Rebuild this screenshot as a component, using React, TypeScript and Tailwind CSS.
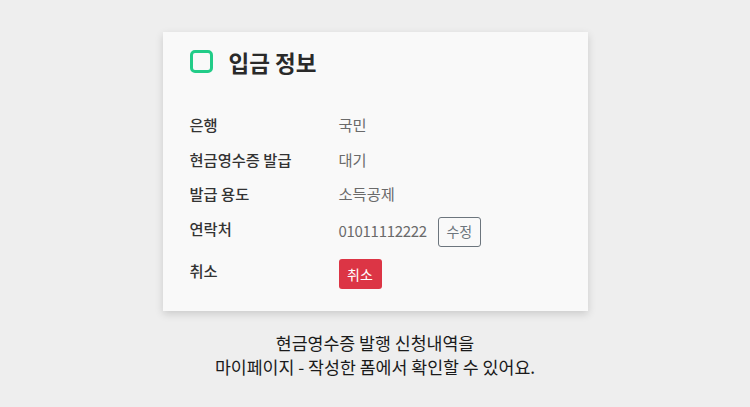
import React from 'react';

const rows = [
  { label: '은행', value: '국민' },
  { label: '현금영수증 발급', value: '대기' },
  { label: '발급 용도', value: '소득공제' },
];

const App = () => {
  return (
    <div
      className="min-h-[407px] bg-[#eeeeee] flex flex-col items-center pt-8"
      style={{ fontFamily: '"Noto Sans CJK KR", "Noto Sans", sans-serif' }}
    >
      <div className="w-[425px] bg-[#f9f9f9] shadow-[0_3px_8px_rgba(0,0,0,0.15)] pl-[27px] pr-6 pt-4 pb-[22px]">
        <div className="flex items-center h-[28px]">
          <div className="w-[23px] h-[23px] rounded-[5px] border-[3.5px] border-[#22cc88] mt-[-2px]" />
          <h2 className="ml-4 text-[22.5px] font-bold text-[#2a2a2a] leading-[28px]">입금 정보</h2>
        </div>
        <div className="mt-[37px] flex flex-col gap-[12.5px]">
          {rows.map((r) => (
            <div key={r.label} className="flex items-start">
              <div className="w-[149px] text-[15.3px] leading-[22px] font-medium text-[#333]">{r.label}</div>
              <div className="text-[15.3px] leading-[22px] text-[#6a6a6a]">{r.value}</div>
            </div>
          ))}
          <div className="flex items-start">
            <div className="w-[149px] text-[15.3px] leading-[22px] font-medium text-[#333]">연락처</div>
            <div className="flex items-center h-[30px]">
              <span className="text-[15px] tracking-[-0.3px] text-[#6a6a6a]">01011112222</span>
              <button className="ml-[11px] h-[30px] w-[43px] border border-[#6c757d] rounded-[3px] text-[14px] text-[#6c757d] flex items-center justify-center">
                수정
              </button>
            </div>
          </div>
          <div className="flex items-start">
            <div className="w-[149px] text-[15.3px] leading-[22px] font-medium text-[#333]">취소</div>
            <button className="h-[30px] w-[43px] bg-[#dc3545] rounded-[3px] text-[14px] text-white flex items-center justify-center">
              취소
            </button>
          </div>
        </div>
      </div>
      <p className="mt-[20px] text-center text-[17.3px] leading-[24px] text-[#1a1a1a]">
        현금영수증 발행 신청내역을
        <br />
        마이페이지 - 작성한 폼에서 확인할 수 있어요.
      </p>
    </div>
  );
};

export default App;
